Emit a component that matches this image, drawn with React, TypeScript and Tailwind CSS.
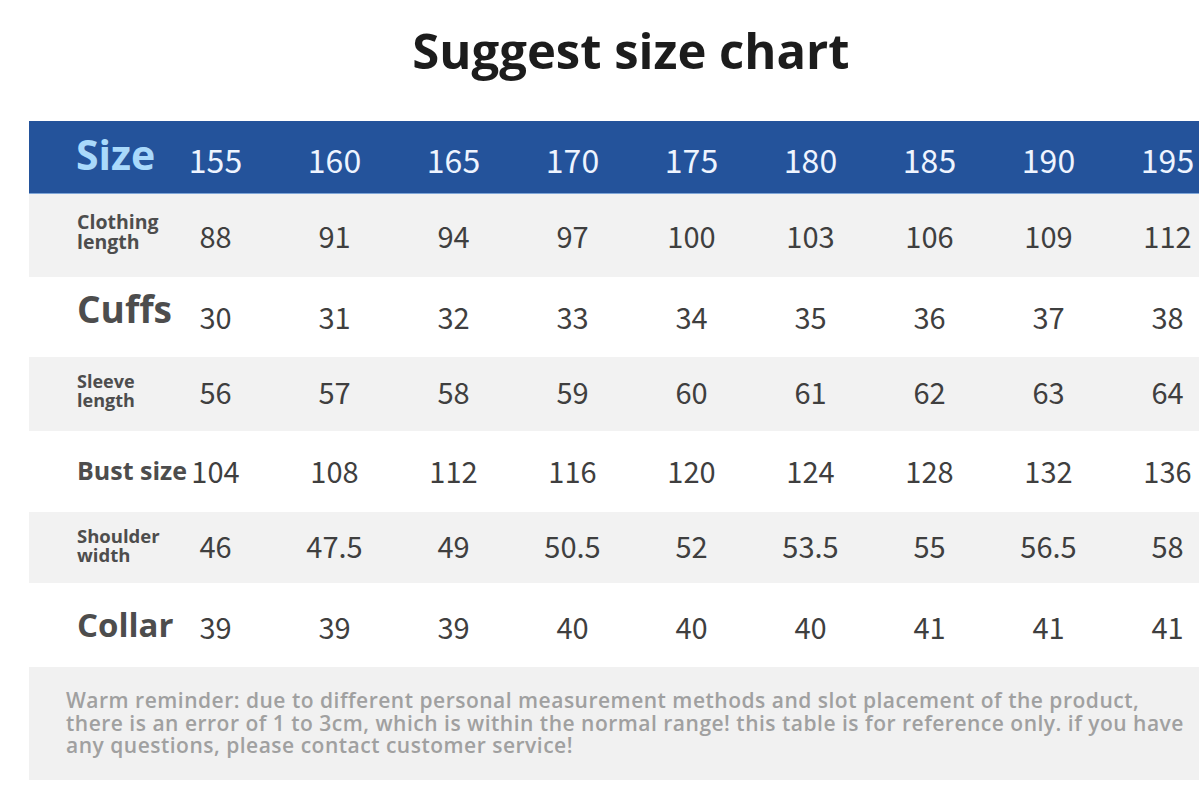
import React from "react";

const sizes = ["155", "160", "165", "170", "175", "180", "185", "190", "195"];

type Row = {
  label: React.ReactNode;
  labelClass: string;
  values: string[];
  bg: string;
  h: string;
  numClass: string;
};

const rows: Row[] = [
  {
    label: (
      <>
        Clothing
        <br />
        length
      </>
    ),
    labelClass: "text-[19.5px] leading-[20px] -mt-[8px]",
    values: ["88", "91", "94", "97", "100", "103", "106", "109", "112"],
    bg: "bg-[#f2f2f2]",
    h: "h-[83px]",
    numClass: "-mt-[1px]",
  },
  {
    label: "Cuffs",
    labelClass: "text-[37px] leading-[40px] -mt-[16px]",
    values: ["30", "31", "32", "33", "34", "35", "36", "37", "38"],
    bg: "bg-white",
    h: "h-[80px]",
    numClass: "-mt-[2px]",
  },
  {
    label: (
      <>
        Sleeve
        <br />
        length
      </>
    ),
    labelClass: "text-[18px] leading-[19px] -mt-[6px]",
    values: ["56", "57", "58", "59", "60", "61", "62", "63", "64"],
    bg: "bg-[#f2f2f2]",
    h: "h-[74px]",
    numClass: "-mt-[6px]",
  },
  {
    label: "Bust size",
    labelClass: "text-[25px] leading-[28px] -mt-[4px]",
    values: ["104", "108", "112", "116", "120", "124", "128", "132", "136"],
    bg: "bg-white",
    h: "h-[81px]",
    numClass: "-mt-[3px]",
  },
  {
    label: (
      <>
        Shoulder
        <br />
        width
      </>
    ),
    labelClass: "text-[18.5px] leading-[19px] -mt-[6px]",
    values: ["46", "47.5", "49", "50.5", "52", "53.5", "55", "56.5", "58"],
    bg: "bg-[#f2f2f2]",
    h: "h-[71px]",
    numClass: "-mt-[6px]",
  },
  {
    label: "Collar",
    labelClass: "text-[33px] leading-[38px] pl-[4px] -mt-[1px]",
    values: ["39", "39", "39", "40", "40", "40", "41", "41", "41"],
    bg: "bg-white",
    h: "h-[84px]",
    numClass: "mt-[1px]",
  },
];

const labelFont = { fontFamily: '"Open Sans", "Noto Sans", sans-serif' };
const numFont = { fontFamily: '"Noto Sans CJK SC", "Noto Sans", sans-serif' };

export default function App() {
  return (
    <div className="w-[1199px] h-[808px] overflow-hidden bg-white">
      <div className="h-[121px] flex justify-center pt-[17px]">
        <h1
          className="text-[49px] font-bold text-[#1c1c1c] leading-[66px] pl-[63px]"
          style={labelFont}
        >
          Suggest size chart
        </h1>
      </div>

      <div className="ml-[29px] w-[1200px]">
        <div className="flex items-center h-[73px] bg-[#24539b] border-b border-[#7fa6d8]">
          <div
            className="w-[127px] shrink-0 pl-[47px] text-[41px] font-bold text-[#a9d9fb] whitespace-nowrap leading-[46px] -mt-[7px]"
            style={labelFont}
          >
            Size
          </div>
          {sizes.map((s) => (
            <div
              key={s}
              className="w-[119px] shrink-0 text-center text-[32px] text-[#eef4ff] leading-[40px] mt-[4px]"
              style={numFont}
            >
              {s}
            </div>
          ))}
        </div>

        {rows.map((r, i) => (
          <div key={i} className={`flex items-center ${r.bg} ${r.h}`}>
            <div
              className={`w-[127px] shrink-0 pl-[48px] font-bold text-[#4d4d4d] whitespace-nowrap overflow-visible ${r.labelClass}`}
              style={labelFont}
            >
              {r.label}
            </div>
            {r.values.map((v, j) => (
              <div
                key={j}
                className={`w-[119px] shrink-0 text-center text-[29px] text-[#3f3f3f] leading-[36px] ${r.numClass}`}
                style={numFont}
              >
                {v}
              </div>
            ))}
          </div>
        ))}

        <div className="bg-[#f1f1f1] h-[113px] pl-[37px] pt-[22px]">
          <p
            className="text-[21px] font-semibold leading-[22.5px] tracking-[0.5px] text-[#a0a0a0] whitespace-nowrap"
            style={labelFont}
          >
            Warm reminder: due to different personal measurement methods and slot placement of the product,
            <br />
            there is an error of 1 to 3cm, which is within the normal range! this table is for reference only. if you have
            <br />
            any questions, please contact customer service!
          </p>
        </div>
      </div>
    </div>
  );
}
